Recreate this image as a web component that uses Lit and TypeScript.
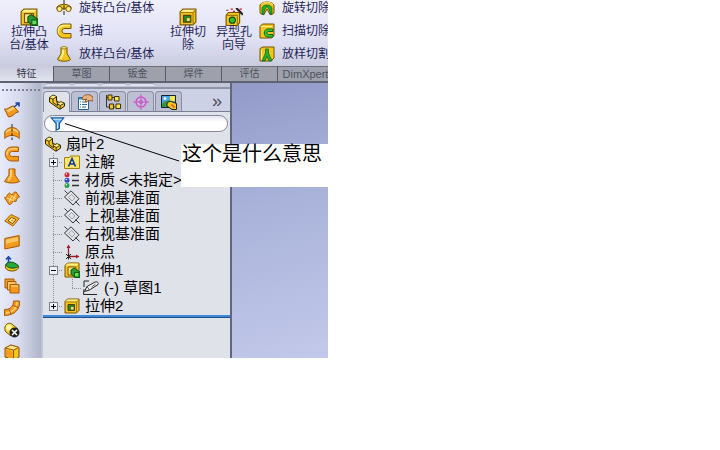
import { LitElement, html, css, svg, nothing, type SVGTemplateResult } from "lit";
import { customElement, property } from "lit/decorators.js";

const Y = "#f2c61c";
const L = "#fff08a";
const D = "#7a5200";
const O = "#f59a1b";
const OD = "#a85a08";

const icons: Record<string, SVGTemplateResult> = {
  extrude: svg`
    <path d="M1 3.5 3.5 1H15v11.5L12.5 15H1z" fill=${Y} stroke=${D}/>
    <path d="M1.5 3.5 3.7 1.5h11l-2 2z" fill=${L}/>
    <path d="M4 5h8v8H4z" fill="#ffe27a" stroke=${D}/>
    <path d="M7 8l3-2 6 4v5.500h-5L7 12z" fill="#2c9a30" stroke="#0c5c14"/>
    <path d="M10.500 10.500H15V15h-4.500z" fill="#62e05a" stroke="#0c5c14"/>`,
  cut: svg`
    <path d="M1 3.500 3.500 1H15v11.500L12.500 15H1z" fill=${Y} stroke=${D}/>
    <path d="M1.500 3.500 3.700 1.500h11l-2 2z" fill=${L}/>
    <path d="M12.500 4v11M1 4h11.500L15 1.500" fill="none" stroke="#a87808"/>
    <path d="M4 6.500h6.500v6H4z" fill="#1d8a2c" stroke="#5a3c00"/>
    <path d="M6.500 8.500h3.500v3.500H6.500z" fill="#e8e070" stroke="#2c4c00" stroke-width=".6"/>`,
  hole: svg`
    <path d="M1 6.500 3 4h10v9l-2 2.500H1z" fill=${Y} stroke=${D}/>
    <path d="M1.500 6.500h9.500v8.500" fill="none" stroke="#a87808"/>
    <circle cx="6.500" cy="10.800" r="2.700" fill="#2fc22f" stroke="#14491a"/>
    <path d="m10 0 6 6" stroke="#222" stroke-width="2"/>
    <path d="M1 2h2M5 1h2M7 3h2M13 1h2" stroke="#c22020"/>`,
  revolve: svg`
    <path d="M1 7c3-3.500 11-3.500 14 0v2H1z" fill=${Y} stroke=${D}/>
    <circle cx="3.500" cy="9" r="2.600" fill=${L} stroke=${D}/>
    <circle cx="12.500" cy="9" r="2.600" fill=${L} stroke=${D}/>
    <path d="M8 0v16" stroke="#222" stroke-dasharray="4 1.500"/>`,
  sweep: svg`
    <path d="M15 1H8C-1 1-1 15 8 15h7v-4.500H9c-4 0-4-5 0-5h6z" fill=${Y} stroke=${D}/>
    <path d="M14 2.500H8C2 3 1.500 8 3 10.500" fill="none" stroke=${L} stroke-width="1.500"/>`,
  loft: svg`
    <path d="M5 1.500h6v6l3.500 6C12 15.800 4 15.800 1.500 13.500L5 7.500z" fill=${Y} stroke=${D}/>
    <path d="M7 2.500v5L4.500 13" stroke=${L} stroke-width="2" fill="none"/>
    <ellipse cx="8" cy="1.800" rx="3" ry="1.200" fill=${L} stroke=${D} stroke-width=".7"/>`,
  revcut: svg`
    <path d="M1 5c2-4 12-4 14 0v8c-1 1-3 2-4 1.500L8 9l-3 5.500C4 15 2 14 1 13z" fill=${Y} stroke=${D}/>
    <path d="M3 14V8c1-4 9-4 10 0v6l-2 .5C11 10 9.500 9 8 6c-1.500 3-3 4-3 8.500z" fill="#22b02c" stroke="#0d6218" stroke-width=".7"/>
    <path d="M2 4.500c3-3 9-3 12 0" stroke=${L} fill="none"/>`,
  swcut: svg`
    <path d="M1 3.500 3.500 1H15v11.500L12.500 15H1z" fill=${Y} stroke=${D}/>
    <path d="M2 3.500h11" stroke=${L}/>
    <path d="M14 6H9c-5 0-5 8 0 8h5v-2.500H9.500c-2 0-2-3 0-3H14z" fill="#35cc3a" stroke="#0d6218"/>`,
  loftcut: svg`
    <path d="M1 2.500 4 1h11v11l-3 3H1z" fill=${Y} stroke=${D}/>
    <path d="M6.500 3h3v4l3.500 8h-3L8 10.500 6 15H3l3.500-8z" fill="#22b02c" stroke="#0d6218" stroke-width=".7"/>
    <path d="M2.500 4v10" stroke=${L}/>`,
  oExtrude: svg`
    <path d="M.5 7c4 1 5-3 9-3l5 6c-4 0-5 5-10 5z" fill=${O} stroke=${OD}/>
    <path d="M2.500 8c3.500 0 4-3 7-3l1.500 2c-3 0-4 3-7 3z" fill="#ffd27a"/>
    <path d="m10 5 5-4M11.500 1H15v3.500" stroke="#1b3fa8" stroke-width="1.500" fill="none"/>`,
  oRevolve: svg`
    <path d="M.8 8c3-6 11.400-6 14.400 0v6.500C12 10.500 4 10.500.8 14.500z" fill=${O} stroke=${OD}/>
    <path d="M2 8.500c3-4 9-4 12 0" stroke="#ffd27a" stroke-width="1.500" fill="none"/>
    <path d="M8 0v16" stroke="#222" stroke-dasharray="3 1.500"/>`,
  oSweep: svg`
    <path d="M14.500 1H8C-1 1-1 15 8 15h6.500v-4.500H8.500c-4 0-4-5 0-5h6z" fill=${O} stroke=${OD}/>
    <path d="M13.500 2.800H8C4 3 2.500 6 3 9" fill="none" stroke="#ffd27a" stroke-width="1.500"/>`,
  oLoft: svg`
    <path d="M5 1h6v6l4.500 6.500c-4 2-11 2-15 0L5 7z" fill=${O} stroke=${OD}/>
    <path d="M7 1.500V8l-3 5" stroke="#ffd27a" stroke-width="2" fill="none"/>`,
  oBoundary: svg`
    <path d="M.5 7.500C3 8 3 4 5.500 3l2.500 2c1-2 2-3 4-3l3.500 5c-2 .5-3 2-3.500 4.500L9 11c-.5 2-2 3.500-4 3.500z" fill=${O} stroke=${OD}/>
    <path d="m3 8 7 3M6 5l6 4M8 6l-3 6m7-8-3 6" stroke="#ffe092" fill="none"/>`,
  oFill: svg`
    <path d="M.8 9 7 2.500l8.200 4L9 14z" fill="#f0b726" stroke=${OD}/>
    <path d="m4 8.800 3.500-3.300 4.500 2-3.500 4z" fill="#fff0a0" stroke="#7a4a00"/>
    <path d="m6.500 8.500 1.500-1 2 1-1.500 1.200z" fill=${O}/>`,
  oPlane: svg`
    <path d="M.8 4.500 15.200 1.500V12L.8 15z" fill=${O} stroke=${OD}/>
    <path d="M2 5.500l12-2.500v4L2 10z" fill="#ffc566"/>`,
  oDome: svg`
    <path d="M1.500 10c0-5 8-5 13 0v2c-2 4-11 4-13 0z" fill=${Y} stroke=${D}/>
    <path d="M2 9c1-4 8-4 12.500 1-2 3-11 3-12.500-1z" fill="#27a83a" stroke="#0c5c20"/>
    <path d="M4.500 7V1M2 3.500 4.500.8 7 3.500" stroke="#1848a8" stroke-width="1.600" fill="none"/>`,
  oOffset: svg`
    <path d="M1 1h9v9H1z" fill=${O} stroke=${OD}/>
    <path d="M3.500 3.500h8.500v8.500H3.500z" fill="#ffc566" stroke=${OD}/>
    <path d="M6 6.500h9V15H6z" fill=${O} stroke=${OD}/>
    <path d="M7 8h7" stroke="#ffe0a0"/>`,
  oElbow: svg`
    <path d="M9.500 1h6c1 8-5 14.500-15 14.500v-6c6 0 9-3 9-8.500z" fill=${O} stroke=${OD}/>
    <path d="M13 2c0 6-4 10.500-11 11" stroke="#ffd27a" stroke-width="1.500" fill="none"/>
    <path d="m9.500 5.500 5 2M5 9.500l2 4.500" stroke=${OD}/>`,
  oDelete: svg`
    <path d="M1 5c1-4 5-5 8-2l5 4-7 7-5-4c-1-1-1.500-3-1-5z" fill="#f4d73a" stroke=${D}/>
    <circle cx="5" cy="5.500" r="3" fill="#fff3a0"/>
    <circle cx="10.500" cy="10.500" r="5" fill="#222"/>
    <path d="m8 8 5 5m0-5-5 5" stroke="#fff" stroke-width="1.600"/>`,
  oBox: svg`
    <path d="m1 4 6-3 8 2.500V13l-5 3-9-3z" fill=${Y} stroke=${D}/>
    <path d="m1 4 6-3 8 2.500L9.500 6z" fill="#ffe98a" stroke=${OD}/>
    <path d="M9.500 6v10" stroke=${D}/>
    <path d="M2 5.500 8.500 7.500v7L2 12.500z" fill=${O}/>`,
  part: svg`
    <path d="M.5 3.500 4 1l3.500 1.500v4L10 8.500l2-.8 3.500 1.500v3L11 15.300.5 8z" fill=${Y} stroke="#2c2200"/>
    <path d="M1 3.500 4 1.500l3 1.200L4 5z" fill=${L}/>
    <path d="M8.500 9.800 12 8.200l3 1.200-3.500 2z" fill=${L}/>
    <path d="M4 5.300v3.200l4.500 3.200V9.800L7.500 6.500M4 5.300.8 3.800M4 5.300l3.200-2.300M8.500 9.800l2.700 1.700 3.800-2M11.200 11.500V15" fill="none" stroke="#2c2200" stroke-width=".9"/>`,
  props: svg`
    <path d="M1.500 3.500h10v12h-10z" fill="#fff" stroke="#25608e"/>
    <path d="M1.500 3.500h10v2h-10z" fill="#3a86c4"/>
    <path d="M3 8h1m1 0h5M3 10.500h1m1 0h5M3 13h1m1 0h4" stroke="#2c6ca4"/>
    <path d="M5 4c2-3 5-4 8-3l3 2v4l-4-.5L9 8l-1-1 2-2-4 1z" fill="#eab27e" stroke="#7c4a20" stroke-width=".8"/>`,
  config: svg`
    <path d="M1.500 1v12h9M1.500 3.500h8" fill="none" stroke="#333"/>
    <path d="M3 1h4v5H3zM4.500 10h4v5h-4z" fill=${Y} stroke="#3c3000"/>
    <path d="M9.500 2.500h4.500V7H9.500zM11 10h4.500v4.500H11z" fill="#ffe64a" stroke="#3c3000"/>`,
  target: svg`
    <circle cx="8" cy="8" r="5" fill="none" stroke="#cc55cf" stroke-width="1.500"/>
    <circle cx="8" cy="8" r="1.600" fill="none" stroke="#cc55cf"/>
    <path d="M8 0v16M0 8h16" stroke="#cc55cf"/>`,
  display: svg`
    <path d="M.5 1.500h14v12H.5z" fill="#4aa4e4" stroke="#123"/>
    <path d="M1 10c4-5 8-4 13-1v4H1z" fill="#2f9a3c"/>
    <circle cx="4" cy="4.500" r="1.500" fill="#fff"/>
    <path d="M9 2h5v5H9z" fill="#f7e84a"/>
    <path d="m6 9 3-2 6.500 2.500v6H11L6 12z" fill=${Y} stroke="#222"/>
    <path d="m10.500 10.500 3 3" stroke="#e24a32" stroke-width="1.500"/>`,
  funnel: svg`
    <path d="M1.500 2h13L10 8v5.500L6.500 15V8z" fill="#6db7ec" stroke="#1c5a9a" stroke-width="1.300"/>
    <path d="M3.500 3.500h9" stroke="#c8e8ff"/><path d="M8 6.500v7" stroke="#d4efff"/>`,
  note: svg`
    <path d="M.5 3.500h5l1-1.500h9v12.500H.5z" fill="#ffe669" stroke="#a58008"/>
    <path d="m4.500 12.500 3.500-8 3.500 8M6 10h4" fill="none" stroke="#143c9c" stroke-width="1.700"/>`,
  material: svg`
    <circle cx="3" cy="2.800" r="2.500" fill="#d42432"/><circle cx="3" cy="8.200" r="2.500" fill="#2b4ad0"/>
    <circle cx="3" cy="13.500" r="2.500" fill="#2ba044"/>
    <path d="M8 3.500h7M8 8.500h7M8 13.500h7" stroke="#333" stroke-width="1.500"/>
    <circle cx="2.400" cy="2" r=".8" fill="#fff"/><circle cx="2.400" cy="7.500" r=".8" fill="#fff"/><circle cx="2.400" cy="12.800" r=".8" fill="#fff"/>`,
  plane: svg`
    <path d="M.5 7 7 .8l8 8L9 15z" fill="none" stroke="#333"/>
    <path d="m4.500 7.500 3-3 3.500 3.500-3 3z" stroke="#777" fill="none" stroke-width=".6"/>
    <path d="m11.500 11.500 4 4M.5.500l3 3" stroke="#333"/>`,
  origin: svg`
    <path d="M4.500 12V2M5 12.500h8" stroke="#a01c28" stroke-width="1.300"/>
    <path d="M2.500 4 4.500.5l2 3.500zM12 10.500l3.500 2-3.500 2z" fill="#a01c28"/>
    <path d="m2 10 5 5m0-5-5 5M4.500 9.500v6" stroke="#222"/>`,
  sketch: svg`
    <path d="M6 1H1v6M1 9l-.5 5.500H14" fill="none" stroke="#222"/>
    <path d="m1.500 11.500 2.500-5 8-4.500c2-.5 4 .5 3 2.500L6.500 10z" fill="#f4f4f4" stroke="#222"/>
    <path d="m4 6.500 2.500 3.500m2-3 4-3" stroke="#222" fill="none" stroke-width=".7"/>`,
};

const icon = (name: string, size = 16) =>
  html`<svg width=${size} height=${size} viewBox="0 0 16 16" aria-hidden="true">${icons[name]}</svg>`;

const base = css`
  * { box-sizing: border-box; }
  :host { font-family: "Liberation Sans", "Noto Sans CJK SC", sans-serif; }
  button { appearance: none; border: 0; margin: 0; padding: 0; background: none; font: inherit; color: inherit; }
  svg { display: block; flex: none; }
`;

@customElement("command-ribbon")
class CommandRibbon extends LitElement {
  static styles = [base, css`
    :host { display: block; min-width: 0; color: #1f1f58; }
    .commands {
      display: flex; align-items: flex-end; height: 66px; overflow: hidden; padding-left: 6px;
      background: linear-gradient(#f0f0fc, #dfe0f3 60%, #c9cbdf);
    }
    .big {
      flex: none; width: 46px; padding-bottom: 14px;
      display: flex; flex-direction: column; align-items: center;
      font-size: 12px; line-height: 13px; white-space: pre-line;
    }
    .stack { flex: none; width: 113px; padding: 0 0 1px 4px; }
    .stack.narrow { padding-left: 2px; }
    .small { display: flex; align-items: center; gap: 7px; height: 23px; font-size: 12px; line-height: 16px; white-space: nowrap; }
    .tabs { display: flex; overflow: hidden; height: 17px; background: #9ea1ac; border-bottom: 2px solid #5f6371; }
    .tab {
      flex: none; width: 56px; font-size: 10px; line-height: 14px; color: #50525e;
      border-left: 1px solid #565a66; border-top: 1px solid #6d707c; white-space: nowrap;
    }
    .tab.active { width: 53px; height: 15px; border: 0; background: linear-gradient(#c9cbdc, #e2e3ee); color: #34364a; }
    .latin { font-size: 11px; }
  `];

  private big(name: string, label: string) {
    return html`<button class="big">${icon(name, 18)}<span>${label}</span></button>`;
  }

  private small([name, label]: string[]) {
    return html`<button class="small">${icon(name)}${label}</button>`;
  }

  render() {
    return html`
      <div class="commands">
        ${this.big("extrude", "拉伸凸\n台/基体")}
        <div class="stack">
          ${[["revolve", "旋转凸台/基体"], ["sweep", "扫描"], ["loft", "放样凸台/基体"]].map(this.small)}
        </div>
        ${this.big("cut", "拉伸切\n除")} ${this.big("hole", "异型孔\n向导")}
        <div class="stack narrow">
          ${[["revcut", "旋转切除"], ["swcut", "扫描切除"], ["loftcut", "放样切割"]].map(this.small)}
        </div>
      </div>
      <nav class="tabs">
        ${["特征", "草图", "钣金", "焊件", "评估"].map(
          (t, i) => html`<button class="tab ${i ? "" : "active"}">${t}</button>`)}
        <button class="tab latin">DimXpert</button>
      </nav>`;
  }
}

@customElement("tool-strip")
class ToolStrip extends LitElement {
  static styles = [base, css`
    :host {
      display: block; flex: none; width: 43px; padding: 6px 2px 0;
      background: linear-gradient(90deg, #e7eafa, #d7dbed 45%, #b0b6cb 94%, #c9cddd);
    }
    .grip { height: 2px; margin-bottom: 8px; background: repeating-linear-gradient(90deg, #7d8298 0 2px, transparent 2px 4px); }
    .tool { display: block; height: 22px; padding: 3px 2px; overflow: hidden; }
    .tool:last-child { height: 17px; padding-bottom: 0; }
  `];

  render() {
    return html`<div class="grip"></div>
      ${["oExtrude", "oRevolve", "oSweep", "oLoft", "oBoundary", "oFill", "oPlane", "oDome", "oOffset", "oElbow", "oDelete", "oBox"]
        .map((n) => html`<button class="tool" aria-label=${n.slice(1)}>${icon(n)}</button>`)}`;
  }
}

interface Row { icon: string; label: string; gutters: string[]; toggle?: string }

const rows: Row[] = [
  { icon: "part", label: "扇叶2", gutters: [] },
  { icon: "note", label: "注解", gutters: ["tee"], toggle: "+" },
  { icon: "material", label: "材质 <未指定>", gutters: ["tee"] },
  { icon: "plane", label: "前视基准面", gutters: ["tee"] },
  { icon: "plane", label: "上视基准面", gutters: ["tee"] },
  { icon: "plane", label: "右视基准面", gutters: ["tee"] },
  { icon: "origin", label: "原点", gutters: ["tee"] },
  { icon: "extrude", label: "拉伸1", gutters: ["tee"], toggle: "−" },
  { icon: "sketch", label: "(-) 草图1", gutters: ["line", "end"] },
  { icon: "cut", label: "拉伸2", gutters: ["end"], toggle: "+" },
];

@customElement("feature-tree")
class FeatureTree extends LitElement {
  @property({ attribute: false }) rows: Row[] = rows;

  static styles = [base, css`
    :host { display: block; color: #000; border-bottom: 1px solid #1d4f8c; }
    ul { list-style: none; margin: 0; padding: 0; border-bottom: 2px solid #3f8ad8; }
    li { display: flex; align-items: center; height: 18px; font-size: 15px; line-height: 18px; white-space: nowrap; }
    li > svg { margin-right: 5px; }
    li.root { padding-left: 2px; }
    .gutter {
      flex: none; width: 21px; height: 18px; padding: 5px 0 0 6px;
      background-repeat: no-repeat;
      background-image:
        repeating-linear-gradient(#8a8d98 0 1px, transparent 1px 2px),
        repeating-linear-gradient(90deg, #8a8d98 0 1px, transparent 1px 2px);
      background-position: 10px 0, 10px 9px;
      background-size: 1px 100%, 9px 1px;
    }
    .gutter.line { background-size: 1px 100%, 0 0; }
    .gutter.end { background-size: 1px 9px, 9px 1px; }
    .gutter.line + .gutter { width: 19px; background-position: 8px 0, 8px 9px; }
    .toggle { display: block; width: 9px; height: 9px; border: 1px solid #7d8088; background: #f2f3f7; }
    .toggle path { stroke: #000; }
  `];

  private toggle(kind: string) {
    return html`<button class="toggle" aria-label=${kind === "+" ? "展开" : "折叠"}>
      <svg width="7" height="7" viewBox="0 0 7 7"><path d=${kind === "+" ? "M1 3.5h5M3.5 1v5" : "M1 3.5h5"}/></svg>
    </button>`;
  }

  render() {
    return html`<ul role="tree">${this.rows.map((r) => html`
      <li role="treeitem" class=${r.gutters.length ? "" : "root"}>
        ${r.gutters.map((g) => html`<span class="gutter ${g}">${r.toggle ? this.toggle(r.toggle) : nothing}</span>`)}
        ${icon(r.icon)}<span>${r.label}</span>
      </li>`)}</ul>`;
  }
}

@customElement("feature-panel")
class FeaturePanel extends LitElement {
  static styles = [base, css`
    :host {
      display: block; flex: none; width: 189px;
      background: #e0e2ea; border-right: 2px solid #626780;
    }
    .top {
      display: flex; gap: 2px; height: 5px; padding-left: 2px;
      background: #c3c6d6; border-bottom: 1px solid #8f93a6;
    }
    .top span { width: 26px; height: 3px; background: #e2e4f0; border-top: 1px solid #9ca0b2; border-radius: 3px 3px 0 0; }
    .tabs {
      display: flex; gap: 1px; height: 24px; padding-top: 2px;
      background: #cdd1e6; border-top: 1px solid #8f93a6; border-bottom: 1px solid #7a7e90;
    }
    .tab {
      width: 27px; height: 20px; padding-left: 5px;
      display: flex; align-items: center;
      border: 1px solid #8a8ea0; border-bottom: 0; border-radius: 4px 4px 0 0; background: #bcc0d2;
    }
    .tab.active { height: 21px; background: #e0e2ea; }
    .more { margin-left: auto; padding-right: 8px; font-size: 18px; line-height: 16px; color: #4a4e5e; }
    .filter {
      display: flex; align-items: center; height: 17px; margin: 3px 2px 3px 1px; padding-left: 5px;
      border: 1px solid #84889a; border-radius: 9px; background: linear-gradient(#e4e6f0, #fff 40%, #fff);
    }
    .filter input { flex: 1; min-width: 0; height: 13px; border: 0; padding: 0; background: none; outline: 0; }
  `];

  render() {
    return html`
      <div class="top"><span></span><span></span><span></span><span></span></div>
      <div class="tabs">
        ${["part", "props", "config", "target", "display"].map(
          (n, i) => html`<button class="tab ${i ? "" : "active"}" aria-label=${n}>${icon(n)}</button>`)}
        <button class="more">»</button>
      </div>
      <label class="filter">${icon("funnel", 15)}<input type="text" aria-label="过滤器"></label>
      <feature-tree></feature-tree>`;
  }
}

@customElement("app-root")
class AppRoot extends LitElement {
  static styles = [base, css`
    :host { display: block; }
    .window { position: relative; width: 100%; max-width: 328px; overflow: hidden; }
    .body { display: flex; }
    .view { flex: 1; min-width: 0; background: linear-gradient(165deg, #929bc8, #aab3da 45%, #c2c9ea); }
    .leader { position: absolute; left: 65px; top: 123px; }
    .callout {
      position: absolute; left: 181px; top: 144px; right: 0; height: 43px; margin: 0; padding-left: 1px;
      background: #fff; color: #000; font-size: 20px; line-height: 21px; white-space: nowrap;
    }
  `];

  render() {
    return html`<main class="window">
      <command-ribbon></command-ribbon>
      <div class="body">
        <tool-strip></tool-strip>
        <feature-panel></feature-panel>
        <div class="view"></div>
      </div>
      <svg class="leader" width="115" height="39"><path d="M0 .5 114 38" stroke="#000"/></svg>
      <p class="callout">这个是什么意思</p>
    </main>`;
  }
}
